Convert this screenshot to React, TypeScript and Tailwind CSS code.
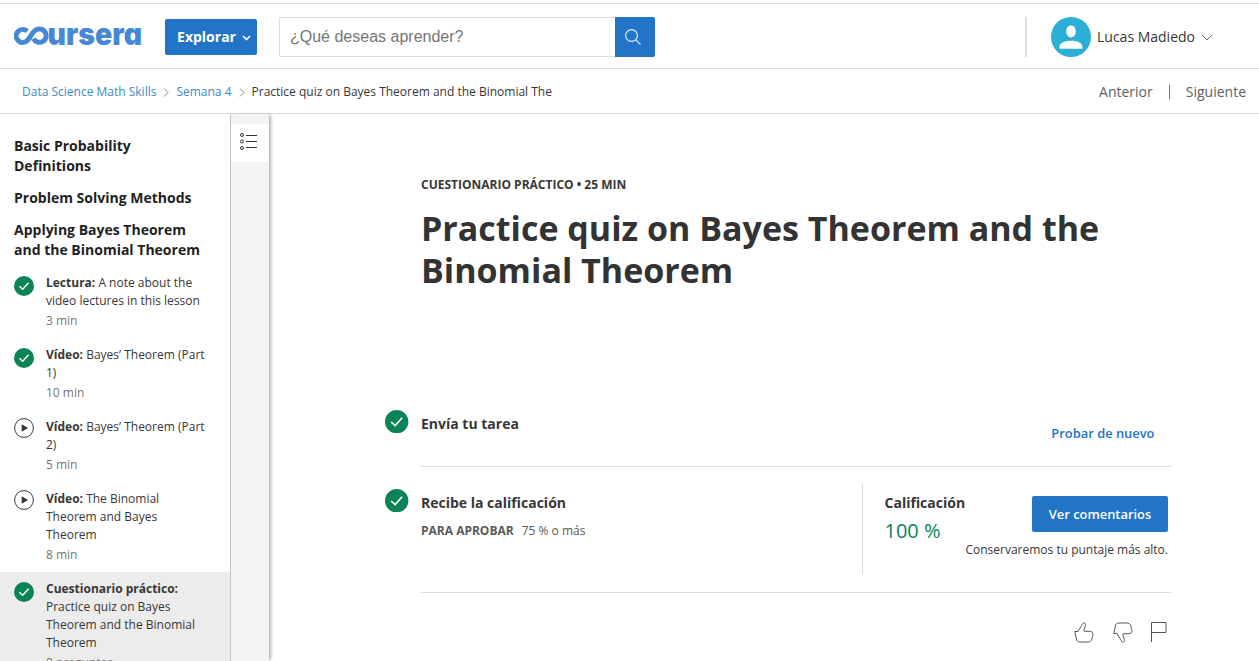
import React from "react";

function Check({ size }: { size: number }) {
  return (
    <svg width={size} height={size} viewBox="0 0 24 24" className="shrink-0">
      <circle cx="12" cy="12" r="12" fill="#0a8457" />
      <path d="M6.4 12.3 10.4 16l7.2-8" fill="none" stroke="#fff" strokeWidth="1.7" />
    </svg>
  );
}

function Play() {
  return (
    <svg width="20" height="20" viewBox="0 0 20 20" className="shrink-0">
      <circle cx="10" cy="10" r="9.4" fill="#fff" stroke="#373a3c" strokeWidth="1" />
      <path d="M7.7 6.2 14 10l-6.3 3.8z" fill="#30343a" />
    </svg>
  );
}

function Logo() {
  return (
    <svg width="128" height="38" viewBox="0 -8 128 38" className="-mt-[2px] shrink-0">
      <path
        d="M13.2 6.2A6.5 6.5 0 1 0 13.4 15.4C16 12.8 17.6 8.6 20.4 6.2A6.7 6.7 0 1 1 19.4 13.6"
        fill="none"
        stroke="#4788d6"
        strokeWidth="5"
      />
      <text
        x="33.5"
        y="19.5"
        textLength="94.5"
        lengthAdjust="spacingAndGlyphs"
        fill="#4788d6"
        className="font-['Inter',sans-serif] text-[30px] font-black [font-feature-settings:'cv11']"
      >
        ursera
      </text>
    </svg>
  );
}

function Chevron() {
  return (
    <svg width="6" height="9" viewBox="0 0 6 9" className="mt-[3px] shrink-0">
      <path d="m1 .5 4 4-4 4" fill="none" stroke="#8a8a8a" />
    </svg>
  );
}

function Thumb() {
  return (
    <svg width="20" height="21" viewBox="0 0 20 21" fill="none" stroke="#4f555d" strokeWidth="1">
      <path d="M.8 9.5h3.1L7.7 3.4C8.2 2.5 8.8.8 9.8.8c1.4 0 1.9 1.6 1.5 2.8L9.8 8.4c-.1.6.1.9.6.9h5.3c2 0 3.3 1.3 3.3 3 0 1-.3 1.6-.7 2.4.2 2.2-1.2 5.3-4 5.3H6.1c-2.2 0-3.4-1.1-3.8-3.2L.8 9.5Z" />
    </svg>
  );
}

type Item = { kind: string; title: string; meta: string; done: boolean; active?: boolean };

const items: Item[] = [
  { kind: "Lectura:", title: "A note about the video lectures in this lesson", meta: "3 min", done: true },
  { kind: "Vídeo:", title: "Bayes’ Theorem (Part 1)", meta: "10 min", done: true },
  { kind: "Vídeo:", title: "Bayes’ Theorem (Part 2)", meta: "5 min", done: false },
  { kind: "Vídeo:", title: "The Binomial Theorem and Bayes Theorem", meta: "8 min", done: false },
  { kind: "Cuestionario práctico:", title: "Practice quiz on Bayes Theorem and the Binomial Theorem", meta: "8 preguntas", done: true, active: true },
];

function Row({ item }: { item: Item }) {
  return (
    <li className={item.active ? "flex gap-3 bg-[#ececec] pt-2 pr-6 pb-2 pl-[14px]" : "flex gap-3 pt-2 pr-6 pb-2 pl-[14px]"}>
      <span className={item.done ? "mt-[2px] h-5" : "h-5"}>{item.done ? <Check size={20} /> : <Play />}</span>
      <div className="min-w-0 flex-1">
        <p className="text-[12px] leading-[18px] text-[#373737]">
          <b className="font-bold">{item.kind}</b> {item.title}
        </p>
        <p className="mt-[2px] text-[12px] leading-[18px] text-[#757575]">{item.meta}</p>
      </div>
    </li>
  );
}

export default function App() {
  return (
    <div className="flex h-[661px] w-[1259px] flex-col overflow-hidden bg-white pt-[3px] font-['Open_Sans',sans-serif] text-[#373737]">
      <header className="flex h-[66px] shrink-0 items-center border-y border-[#dcdcdc] pt-[2px] pl-[14px]">
        <Logo />
        <button className="ml-[23px] flex h-9 w-[92px] items-center justify-center gap-[6px] rounded-[2px] bg-[#2274c6] pb-px pl-[6px] text-[14px] font-bold text-white">
          Explorar
          <svg width="9" height="6" viewBox="0 0 9 6" className="mt-[3px]">
            <path d="m1 1 3.5 3.5L8 1" fill="none" stroke="#fff" strokeWidth="1.7" />
          </svg>
        </button>
        <div className="ml-[22px] flex h-10 w-[336px] items-center rounded-l-[2px] border border-r-0 border-[#dcdcdc] pl-[10px] font-['Liberation_Sans',sans-serif] text-[16px] text-[#757575]">
          ¿Qué deseas aprender?
        </div>
        <button className="flex h-10 w-10 items-center justify-center rounded-r-[2px] bg-[#2274c6] pr-[4px]">
          <svg width="16" height="16" viewBox="0 0 16 16" fill="none" stroke="#e3eefa" strokeWidth="1.2">
            <circle cx="6.5" cy="6.5" r="5.9" />
            <path d="m10.8 10.8 4.8 4.8" />
          </svg>
        </button>
        <div className="ml-[370px] h-10 w-[2px] bg-[#dedede]" />
        <svg width="40" height="40" viewBox="0 0 40 40" className="ml-6 shrink-0">
          <circle cx="20" cy="20" r="20" fill="#2cafd7" />
          <ellipse cx="20" cy="14.4" rx="4.8" ry="6.1" fill="#fff" />
          <path d="M8.5 31.8v-2.4c0-3.5 5.6-5.6 11.5-5.6s11.3 2.1 11.3 5.6v2.4z" fill="#fff" />
        </svg>
        <span className="-mt-[2px] ml-[6px] text-[14px]">Lucas Madiedo</span>
        <svg width="12" height="7" viewBox="0 0 12 7" className="ml-[6px]">
          <path d="m1 1 5 5 5-5" fill="none" stroke="#666" />
        </svg>
      </header>

      <nav className="flex h-[45px] shrink-0 items-center border-b border-[#dcdcdc] pr-[13px] pl-[22px] text-[12px]">
        <a className="mt-[2px] text-[#4189c4]">Data Science Math Skills</a>
        <span className="ml-[7px]"><Chevron /></span>
        <a className="mt-[2px] ml-[7px] text-[#4189c4]">Semana 4</a>
        <span className="ml-[7px]"><Chevron /></span>
        <span className="mt-[2px] ml-[7px]">Practice quiz on Bayes Theorem and the Binomial The</span>
        <div className="ml-auto flex items-center text-[14px] text-[#5e5e5e]">
          <span>Anterior</span>
          <span className="mx-4 mt-px h-[14px] w-px bg-[#777]" />
          <span>Siguiente</span>
        </div>
      </nav>

      <div className="flex min-h-0 flex-1">
        <aside className="w-[230px] shrink-0 overflow-hidden pt-[22px]">
          <h3 className="pl-[14px] text-[14px] leading-5 font-bold text-[#1f1f1f]">Basic Probability<br />Definitions</h3>
          <h3 className="mt-3 pl-[14px] text-[14px] leading-5 font-bold text-[#1f1f1f]">Problem Solving Methods</h3>
          <h3 className="mt-3 pl-[14px] text-[14px] leading-5 font-bold text-[#1f1f1f]">Applying Bayes Theorem<br />and the Binomial Theorem</h3>
          <ul className="mt-[6px] flex flex-col">
            {items.map((item, i) => (
              <Row key={i} item={item} />
            ))}
          </ul>
        </aside>
        <div className="w-[39px] shrink-0 border-l border-[#c4c4c4] bg-[#f3f3f3] pt-[10px] shadow-[3px_0_3px_-1px_rgba(0,0,0,0.3)]">
          <div className="h-[38px] bg-white pt-[9px] pl-[9px]">
            <svg width="18" height="18" viewBox="0 0 18 18" fill="none" stroke="#333">
              <circle cx="2" cy="2" r="1.5" />
              <circle cx="2" cy="8.5" r="1.5" />
              <circle cx="2" cy="15" r="1.5" />
              <path d="M6 2.5h11M6 8.5h11M6 14.5h11" />
            </svg>
          </div>
        </div>

        <main className="min-w-0 flex-1 pt-[62px] pl-[116px]">
          <div className="ml-[36px]">
            <p className="text-[12px] leading-[18px] font-bold">CUESTIONARIO PRÁCTICO • 25 MIN</p>
            <h1 className="mt-[13px] text-[34px] leading-[42px] font-bold text-[#333]">
              Practice quiz on Bayes Theorem and the<br />Binomial Theorem
            </h1>
          </div>
          <section className="mt-[119px] flex h-[57px] w-[786px]">
            <div className="w-6 pl-[0.4px]"><Check size={23.4} /></div>
            <div className="ml-3 flex flex-1 justify-between border-b border-[#dcdcdc]">
              <h2 className="mt-[4px] text-[14px] leading-5 font-bold">Envía tu tarea</h2>
              <a className="mt-[14px] mr-[16.5px] text-[12.9px] leading-[18px] font-semibold text-[#2274c6]">Probar de nuevo</a>
            </div>
          </section>
          <section className="flex h-[126px] w-[786px]">
            <div className="w-6 pt-[22px] pl-[0.4px]"><Check size={23.4} /></div>
            <div className="ml-3 flex flex-1 border-b border-[#dcdcdc] pt-[17px]">
              <div className="w-[441px] pt-[9px]">
                <h2 className="text-[14px] leading-5 font-bold">Recibe la calificación</h2>
                <p className="mt-[9px] text-[12px] leading-[18px] text-[#5a5a5a]">
                  <b className="mr-2 font-bold">PARA APROBAR</b>75 % o más
                </p>
              </div>
              <div className="flex h-[90px] flex-1 flex-col border-l border-[#dcdcdc] pr-[3px] pl-[21.5px]">
                <div className="flex justify-between">
                  <div className="pt-[9px]">
                    <h2 className="text-[14px] leading-5 font-bold">Calificación</h2>
                    <p className="mt-1 text-[20px] leading-[28px] text-[#0a8457]">100 %</p>
                  </div>
                  <button className="mt-3 h-9 w-[136px] rounded-[2px] bg-[#2274c6] pt-px text-[12.9px] font-semibold text-white">Ver comentarios</button>
                </div>
                <p className="-mt-[4px] text-right text-[12px] leading-[18px]">Conservaremos tu puntaje más alto.</p>
              </div>
            </div>
          </section>
          <div className="mt-[29px] flex w-[782px] items-start justify-end">
            <Thumb />
            <span className="ml-[19px] -scale-y-100"><Thumb /></span>
            <svg width="16" height="21" viewBox="0 0 16 21" fill="none" stroke="#4f555d" className="ml-[18px]">
              <path d="M.5 20V.5h14.5v10H.5" />
            </svg>
          </div>
        </main>
      </div>
    </div>
  );
}
